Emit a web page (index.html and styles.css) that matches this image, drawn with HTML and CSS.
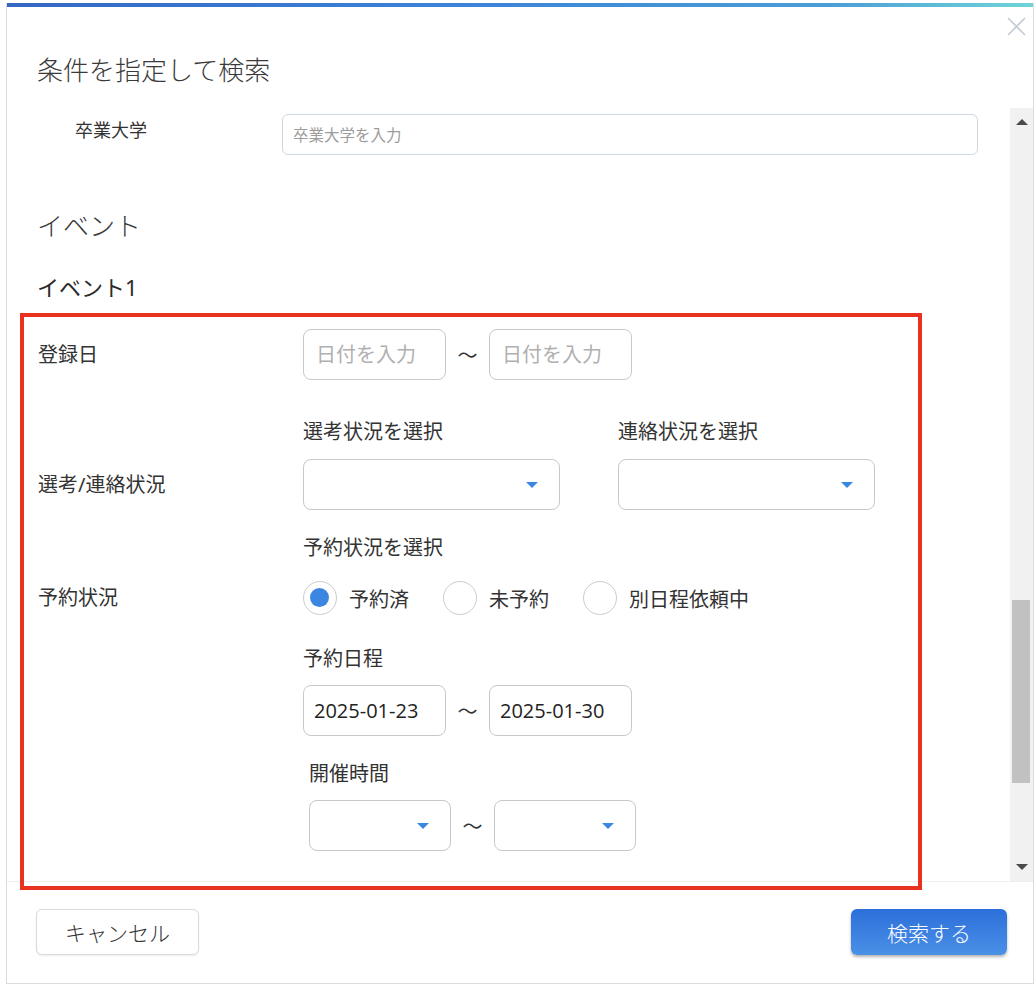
FILE: index.html
```html
<!DOCTYPE html>
<html lang="ja">
<head>
    <meta charset="UTF-8">
    <meta name="viewport" content="width=device-width, initial-scale=1.0">
    <title>条件を指定して検索</title>
    <link rel="stylesheet" href="styles.css">
</head>
<body>
    <div class="dialog">
        <div class="dialog-bar"></div>

        <div class="dialog-head">
            <h2 class="dialog-title">条件を指定して検索</h2>
            <button class="close-btn" aria-label="閉じる">
                <svg width="19" height="19" viewBox="0 0 19 19">
                    <path d="M1 1L18 18M18 1L1 18" stroke="#c3cbd4" stroke-width="1.6" fill="none"/>
                </svg>
            </button>
        </div>

        <div class="dialog-body">
            <div class="scroll-content">
                <!-- 卒業大学 -->
                <div class="field-row">
                    <label class="field-label">卒業大学</label>
                    <input class="text-input" type="text" placeholder="卒業大学を入力">
                </div>

                <h3 class="section-title">イベント</h3>
                <h4 class="event-title">イベント1</h4>

                <div class="event-form">
                    <div class="form-row">
                        <div class="form-label">登録日</div>
                        <div class="range">
                            <input class="date-input" type="text" placeholder="日付を入力">
                            <span class="tilde">〜</span>
                            <input class="date-input" type="text" placeholder="日付を入力">
                        </div>
                    </div>

                    <div class="form-row row-status">
                        <div class="form-label label-bottom">選考/連絡状況</div>
                        <div class="select-pair">
                            <div class="select-group">
                                <div class="sub-label">選考状況を選択</div>
                                <div class="select"><span class="caret"></span></div>
                            </div>
                            <div class="select-group">
                                <div class="sub-label">連絡状況を選択</div>
                                <div class="select"><span class="caret"></span></div>
                            </div>
                        </div>
                    </div>

                    <div class="form-row row-reserve">
                        <div class="form-label label-radio">予約状況</div>
                        <div class="form-field">
                            <div class="sub-label">予約状況を選択</div>
                            <div class="radios">
                                <label class="radio-option"><span class="radio checked"></span>予約済</label>
                                <label class="radio-option"><span class="radio"></span>未予約</label>
                                <label class="radio-option"><span class="radio"></span>別日程依頼中</label>
                            </div>

                            <div class="sub-label sub-date">予約日程</div>
                            <div class="range">
                                <input class="date-input value" type="text" value="2025-01-23">
                                <span class="tilde">〜</span>
                                <input class="date-input value" type="text" value="2025-01-30">
                            </div>

                            <div class="time-group">
                                <div class="sub-label sub-time">開催時間</div>
                                <div class="range">
                                    <div class="select small"><span class="caret"></span></div>
                                    <span class="tilde">〜</span>
                                    <div class="select small"><span class="caret"></span></div>
                                </div>
                            </div>
                        </div>
                    </div>
                </div>
            </div>

            <div class="scrollbar">
                <div class="sb-arrow"><span class="tri-up"></span></div>
                <div class="sb-track"><div class="sb-thumb"></div></div>
                <div class="sb-arrow"><span class="tri-down"></span></div>
            </div>
        </div>

        <div class="dialog-foot">
            <button class="btn btn-cancel">キャンセル</button>
            <button class="btn btn-search">検索する</button>
        </div>

        <!-- 注目枠 -->
        <div class="highlight"></div>
    </div>
</body>
</html>
```

FILE: styles.css
```css
* {
    box-sizing: border-box;
}

body {
    margin: 0;
    background-color: #fff;
    font-family: "Noto Sans", "Noto Sans CJK JP", sans-serif;
    color: #333;
}

.dialog {
    position: relative;
    width: 1028px;
    height: 981px;
    margin: 3px 0 0 6px;
    border: 1px solid #dcdcdc;
    border-top: none;
    display: flex;
    flex-direction: column;
    background-color: #fff;
}

.dialog-bar {
    height: 4px;
    background: linear-gradient(90deg, #3468c3 0%, #3c84d8 45%, #4a9ed6 80%, #6fd5d8 100%);
}

.dialog-head {
    position: relative;
    height: 101px;
    padding: 45px 30px 0 30px;
}

.dialog-title {
    margin: 0;
    font-size: 26px;
    line-height: 36px;
    font-weight: 300;
    color: #3a3a3a;
}

.close-btn {
    position: absolute;
    top: 10px;
    right: 7px;
    width: 19px;
    height: 19px;
    padding: 0;
    border: none;
    background: none;
    cursor: pointer;
}

.close-btn svg {
    display: block;
}

.dialog-body {
    height: 774px;
    display: flex;
    overflow: hidden;
    border-bottom: 1px solid #efefef;
}

.scroll-content {
    flex: 1;
    padding: 6px 0 0 30px;
}

/* 卒業大学 */
.field-row {
    display: flex;
    align-items: flex-start;
}

.field-label {
    width: 245px;
    padding: 4px 0 0 38px;
    font-size: 18px;
    line-height: 24px;
}

.text-input {
    width: 696px;
    height: 41px;
    border: 1px solid #cdd7e1;
    border-radius: 6px;
    padding: 0 10px;
    font-family: inherit;
    font-size: 15.5px;
    color: #333;
}

.text-input::placeholder {
    color: #9c9c9c;
}

.section-title {
    margin: 53px 0 0;
    font-size: 26px;
    line-height: 36px;
    font-weight: 300;
    color: #3a3a3a;
}

.event-title {
    margin: 29px 0 0;
    font-size: 22px;
    line-height: 28px;
    font-weight: 400;
    color: #2a2a2a;
}

/* イベント条件 */
.event-form {
    margin-top: 28px;
    font-size: 20px;
}

.form-row {
    display: flex;
}

.form-label {
    width: 266px;
    flex-shrink: 0;
    padding-left: 1px;
    line-height: 51px;
    color: #333;
}

.label-bottom {
    align-self: flex-end;
}

.label-radio {
    padding-top: 50px;
    line-height: 28px;
}

.row-status {
    margin-top: 38px;
}

.row-reserve {
    margin-top: 24px;
}

.sub-label {
    line-height: 28px;
    margin-bottom: 13px;
    color: #333;
}

.sub-date {
    margin-top: 30px;
    margin-bottom: 12px;
}

.sub-time {
    margin-top: 24px;
    margin-bottom: 12px;
}

.range {
    display: flex;
    align-items: center;
}

.tilde {
    width: 43px;
    text-align: center;
    font-size: 20px;
    color: #333;
}

.date-input {
    width: 143px;
    height: 51px;
    border: 1px solid #c8c8c8;
    border-radius: 8px;
    padding: 0 12px;
    font-family: inherit;
    font-size: 20px;
    color: #222;
}

.date-input::placeholder {
    color: #b0b0b0;
}

.date-input.value {
    padding: 0 10px;
    font-family: "Open Sans", "Noto Sans", sans-serif;
}

.select-pair {
    display: flex;
    gap: 58px;
}

.select {
    position: relative;
    width: 257px;
    height: 51px;
    border: 1px solid #c8c8c8;
    border-radius: 8px;
    background-color: #fff;
}

.select.small {
    width: 142px;
}

.caret {
    position: absolute;
    right: 21px;
    top: 22px;
    width: 0;
    height: 0;
    border-left: 6px solid transparent;
    border-right: 6px solid transparent;
    border-top: 6px solid #3a87e2;
}

.radios {
    display: flex;
    align-items: center;
    height: 34px;
    margin-top: 19px;
}

.radio-option {
    display: flex;
    align-items: center;
    gap: 12px;
    margin-right: 34px;
    color: #333;
}

.radio {
    position: relative;
    width: 34px;
    height: 34px;
    border: 1.5px solid #cccccc;
    border-radius: 50%;
    background-color: #fff;
}

.radio.checked::after {
    content: "";
    position: absolute;
    left: 6px;
    top: 6px;
    width: 19px;
    height: 19px;
    border-radius: 50%;
    background-color: #3a86e0;
}

.time-group {
    padding-left: 6px;
}

/* スクロールバー */
.scrollbar {
    width: 23px;
    display: flex;
    flex-direction: column;
    background-color: #f1f1f1;
}

.sb-arrow {
    height: 28px;
    display: flex;
    justify-content: center;
    align-items: center;
}

.tri-up {
    border-left: 6px solid transparent;
    border-right: 6px solid transparent;
    border-bottom: 6px solid #4a4a4a;
}

.tri-down {
    border-left: 6px solid transparent;
    border-right: 6px solid transparent;
    border-top: 6px solid #4a4a4a;
}

.sb-track {
    flex: 1;
}

.sb-thumb {
    margin: 464px 3px 0 2px;
    height: 183px;
    background-color: #c1c1c1;
}

/* フッター */
.dialog-foot {
    flex: 1;
    display: flex;
    justify-content: space-between;
    align-items: flex-start;
    padding: 27px 26px 0 29px;
}

.btn {
    height: 46px;
    border-radius: 6px;
    font-family: inherit;
    font-size: 21px;
    font-weight: 300;
    cursor: pointer;
}

.btn-cancel {
    width: 163px;
    border: 1px solid #dadada;
    background-color: #fff;
    color: #333;
    box-shadow: 0 1px 2px rgba(0, 0, 0, 0.08);
}

.btn-search {
    width: 156px;
    border: none;
    background: linear-gradient(180deg, #2c6fdb 0%, #4a90e6 100%);
    color: #fff;
    box-shadow: 0 2px 3px rgba(0, 0, 0, 0.3);
}

.highlight {
    position: absolute;
    left: 13px;
    top: 310px;
    width: 902px;
    height: 577px;
    border: 4px solid #e8321f;
    pointer-events: none;
}
```
